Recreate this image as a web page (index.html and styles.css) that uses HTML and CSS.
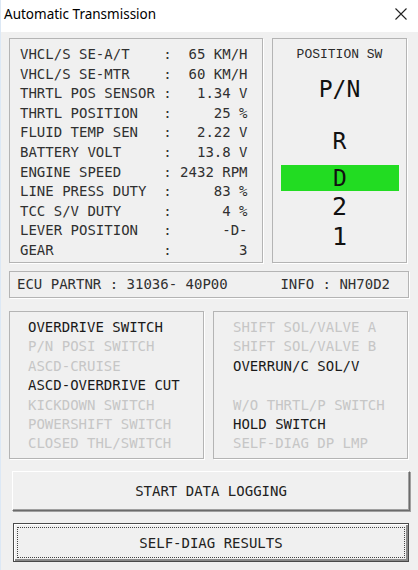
FILE: index.html
```html
<!DOCTYPE html>
<html lang="en">
  <head>
    <meta charset="UTF-8" />
    <meta name="viewport" content="width=device-width, initial-scale=1.0" />
    <title>Automatic Transmission</title>
    <link rel="stylesheet" href="styles.css">
  </head>
  <body>
    <div class="window">
      <header class="titlebar">
        <span class="titlebar-text">Automatic Transmission</span>
        <svg class="titlebar-close" width="12" height="12" viewBox="0 0 12 12">
          <path d="M0.5 0.5 L11.5 11.5 M11.5 0.5 L0.5 11.5" stroke="#222" stroke-width="1.1" fill="none" />
        </svg>
      </header>

      <main class="content">
        <div class="top-row">
          <!-- live data -->
          <section class="panel data-panel">
            <div class="data-row"><span>VHCL/S SE-A/T</span><span>:</span><span class="val">65 KM/H</span></div>
            <div class="data-row"><span>VHCL/S SE-MTR</span><span>:</span><span class="val">60 KM/H</span></div>
            <div class="data-row"><span>THRTL POS SENSOR</span><span>:</span><span class="val">1.34 V</span></div>
            <div class="data-row"><span>THRTL POSITION</span><span>:</span><span class="val">25 %</span></div>
            <div class="data-row"><span>FLUID TEMP SEN</span><span>:</span><span class="val">2.22 V</span></div>
            <div class="data-row"><span>BATTERY VOLT</span><span>:</span><span class="val">13.8 V</span></div>
            <div class="data-row"><span>ENGINE SPEED</span><span>:</span><span class="val">2432 RPM</span></div>
            <div class="data-row"><span>LINE PRESS DUTY</span><span>:</span><span class="val">83 %</span></div>
            <div class="data-row"><span>TCC S/V DUTY</span><span>:</span><span class="val">4 %</span></div>
            <div class="data-row"><span>LEVER POSITION</span><span>:</span><span class="val">-D-</span></div>
            <div class="data-row"><span>GEAR</span><span>:</span><span class="val">3</span></div>
          </section>

          <!-- selector lever -->
          <section class="panel position-panel">
            <div class="position-title">POSITION SW</div>
            <div class="position-item pos-pn">P/N</div>
            <div class="position-item pos-r">R</div>
            <div class="position-item pos-d active">D</div>
            <div class="position-item pos-2">2</div>
            <div class="position-item pos-1">1</div>
          </section>
        </div>

        <section class="panel ecu-panel">
          <span>ECU PARTNR : 31036- 40P00</span>
          <span>INFO : NH70D2</span>
        </section>

        <div class="switch-row">
          <ul class="panel switch-list">
            <li class="on">OVERDRIVE SWITCH</li>
            <li>P/N POSI SWITCH</li>
            <li>ASCD-CRUISE</li>
            <li class="on">ASCD-OVERDRIVE CUT</li>
            <li>KICKDOWN SWITCH</li>
            <li>POWERSHIFT SWITCH</li>
            <li>CLOSED THL/SWITCH</li>
          </ul>
          <ul class="panel switch-list switch-list-right">
            <li>SHIFT SOL/VALVE A</li>
            <li>SHIFT SOL/VALVE B</li>
            <li class="on">OVERRUN/C SOL/V</li>
            <li>&nbsp;</li>
            <li>W/O THRTL/P SWITCH</li>
            <li class="on">HOLD SWITCH</li>
            <li>SELF-DIAG DP LMP</li>
          </ul>
        </div>

        <button class="btn btn-log">START DATA LOGGING</button>
        <button class="btn btn-diag"><span class="focus-rect">SELF-DIAG RESULTS</span></button>
      </main>
    </div>
  </body>
</html>
```

FILE: styles.css
```css
* {
  padding: 0;
  margin: 0;
  box-sizing: border-box;
}

body {
  font-family: "DejaVu Sans Mono", monospace;
  font-size: 14px;
  color: #303030;
  background-color: #f0f0f0;
}

ul {
  list-style: none;
}

.window {
  width: 418px;
  height: 570px;
  border-left: 1px solid #dce8f5;
}

.titlebar {
  display: flex;
  align-items: center;
  justify-content: space-between;
  height: 32px;
  padding: 0 11px 4px 3px;
  background: #fff;
}

.titlebar-text {
  font-family: "Noto Sans", sans-serif;
  font-size: 13.5px;
  color: #000;
}

.content {
  display: flex;
  flex-direction: column;
  padding: 6px 9px 0 8px;
}

.panel {
  border: 1px solid #b4b4b4;
  box-shadow: 1px 1px 0 #fff;
}

.top-row {
  display: flex;
  gap: 9px;
  height: 225px;
}

.data-panel {
  width: 254px;
  padding: 6px 0 0 10px;
}

.data-row {
  display: grid;
  grid-template-columns: 17ch 1ch 9ch;
  height: 19.6px;
  line-height: 19.6px;
  white-space: pre;
}

.data-row .val {
  text-align: right;
}

.position-panel {
  display: flex;
  flex-direction: column;
  align-items: center;
  width: 135px;
  padding: 6px 0 0;
  color: #111;
}

.position-title {
  font-family: "Liberation Mono", monospace;
  font-size: 13px;
  line-height: 20px;
  color: #2a2a2a;
}

.position-item {
  font-size: 23px;
  line-height: 30px;
  align-self: stretch;
  text-align: center;
}

.pos-pn {
  margin-top: 9px;
}

.pos-r {
  margin-top: 22px;
}

.pos-d {
  margin: 9px 7px 0 8px;
  height: 26px;
  line-height: 26px;
}

.pos-d.active {
  background: #22dc22;
}

.pos-2,
.pos-1 {
  font-size: 25px;
}

.pos-2 {
  margin-top: 1px;
}

.ecu-panel {
  display: flex;
  justify-content: space-between;
  height: 27px;
  margin-top: 8px;
  padding: 0 18px 0 7px;
  line-height: 25px;
}

.switch-row {
  display: flex;
  gap: 9px;
  margin-top: 13px;
}

.switch-list {
  width: 195px;
  height: 148px;
  padding: 6px 0 0 18px;
}

.switch-list-right {
  padding-left: 19px;
}

.switch-list li {
  height: 19.4px;
  line-height: 19.4px;
  color: #c6c6c6;
}

.switch-list li.on {
  color: #1a1a1a;
}

.btn {
  display: flex;
  align-items: center;
  justify-content: center;
  font-family: "DejaVu Sans Mono", monospace;
  font-size: 14px;
  color: #222;
  background: #f0f0f0;
  cursor: pointer;
}

.btn-log {
  height: 40px;
  margin: 12px -1px 0 3px;
  border: 1px solid;
  border-color: #fff #6b6b6b #6b6b6b #fff;
  box-shadow: inset -1px -1px 0 #a0a0a0, 1px 1px 0 #a0a0a0;
}

.btn-diag {
  height: 39px;
  margin: 12px 0 0 4px;
  padding: 3px;
  border: 1px solid #4a4a4a;
  box-shadow: inset 1px 1px 0 #fff, inset -2px -2px 0 #8a8a8a;
}

.focus-rect {
  display: flex;
  align-items: center;
  justify-content: center;
  width: 100%;
  height: 100%;
  border: 1px dotted #444;
}
```
